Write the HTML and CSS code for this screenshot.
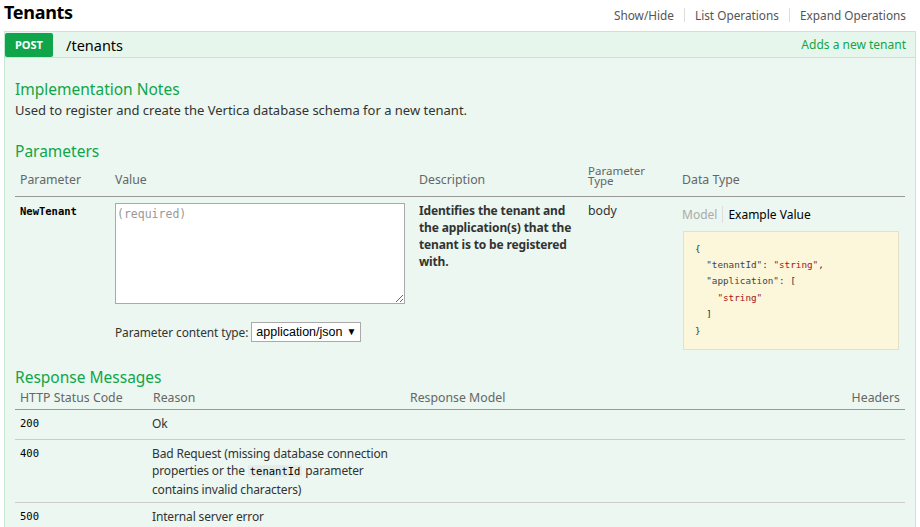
FILE: index.html
```html
<!DOCTYPE html>
<html>
<head>
<meta charset="utf-8">
<link rel="stylesheet" href="styles.css">
</head>
<body>
<div class="page">
  <div class="heading">
    <h2 class="title">Tenants</h2>
    <ul class="options">
      <li>Show/Hide</li>
      <li>List Operations</li>
      <li>Expand Operations</li>
    </ul>
  </div>
  <div class="op">
    <div class="op-head">
      <span class="method">POST</span>
      <span class="path">/tenants</span>
      <span class="summary">Adds a new tenant</span>
    </div>
    <div class="content">
      <h4 class="section first">Implementation Notes</h4>
      <p class="notes">Used to register and create the Vertica database schema for a new tenant.</p>

      <h4 class="section params-title">Parameters</h4>
      <table class="params">
        <colgroup>
          <col class="c1"><col class="c2"><col class="c3"><col class="c4"><col class="c5">
        </colgroup>
        <thead>
          <tr>
            <th>Parameter</th>
            <th>Value</th>
            <th>Description</th>
            <th class="ptype">Parameter<br>Type</th>
            <th>Data Type</th>
          </tr>
        </thead>
        <tbody>
          <tr>
            <td class="pname">NewTenant</td>
            <td>
              <textarea class="body-input" placeholder="(required)"></textarea>
              <div class="ctype">
                <label>Parameter content type:</label>
                <span class="select">application/json <span class="arrow">▼</span></span>
              </div>
            </td>
            <td class="desc">Identifies the tenant and the application(s) that the tenant is to be registered with.</td>
            <td class="body-type">body</td>
            <td>
              <div class="tabs">
                <span class="tab muted">Model</span>
                <span class="tab active">Example Value</span>
              </div>
              <pre class="sample">{
  <span class="key">"tenantId"</span>: <span class="str">"string"</span>,
  <span class="key">"application"</span>: [
    <span class="str">"string"</span>
  ]
}</pre>
            </td>
          </tr>
        </tbody>
      </table>

      <h4 class="section resp-title">Response Messages</h4>
      <table class="resp">
        <colgroup>
          <col class="r1"><col class="r2"><col class="r3"><col class="r4">
        </colgroup>
        <thead>
          <tr>
            <th>HTTP Status Code</th>
            <th>Reason</th>
            <th>Response Model</th>
            <th class="right">Headers</th>
          </tr>
        </thead>
        <tbody>
          <tr>
            <td class="code">200</td>
            <td>Ok</td>
            <td></td>
            <td></td>
          </tr>
          <tr>
            <td class="code">400</td>
            <td>Bad Request (missing database connection properties or the <code>tenantId</code> parameter contains invalid characters)</td>
            <td></td>
            <td></td>
          </tr>
          <tr>
            <td class="code">500</td>
            <td>Internal server error</td>
            <td></td>
            <td></td>
          </tr>
        </tbody>
      </table>
    </div>
  </div>
</div>
</body>
</html>
```

FILE: styles.css
```css
* { box-sizing: border-box; }
html, body { margin: 0; padding: 0; background: #fff; }
body {
  font-family: "Noto Sans", "Open Sans", sans-serif;
  font-size: 13px;
  color: #333;
  overflow: hidden;
}
.page { padding: 0 4px; }

.heading {
  display: flex;
  align-items: center;
  justify-content: space-between;
  height: 31px;
}
.title {
  margin: -8px 0 0 0;
  font-size: 18px;
  font-weight: 700;
  color: #000;
  letter-spacing: -0.3px;
}
.options {
  display: flex;
  list-style: none;
  margin: -2px 0 0 0;
  padding: 0 10px 0 0;
  font-size: 11.8px;
  color: #555;
}
.options li {
  padding: 0 10px;
  border-left: 1px solid #ddd;
  line-height: 14px;
}
.options li:first-child { border-left: 0; }
.options li:last-child { padding-right: 0; }

.op-head {
  display: flex;
  align-items: center;
  height: 27px;
  background: #e7f6ec;
  border: 1px solid #c3e8d1;
  padding: 0 9px 0 0;
}
.method {
  width: 48px;
  height: 24px;
  background: #10a54a;
  color: #fff;
  border-radius: 2px;
  font-size: 11px;
  font-weight: 700;
  display: flex;
  align-items: center;
  justify-content: center;
}
.path {
  margin-left: 13px;
  font-size: 14.5px;
  color: #000;
}
.summary {
  margin-left: auto;
  font-size: 12px;
  color: #10a54a;
}

.content {
  background: #ebf7f0;
  border: 1px solid #c3e8d1;
  border-top: 0;
  padding: 0 10px 40px 10px;
}
.section {
  margin: 0;
  font-size: 15.5px;
  font-weight: 400;
  color: #10a54a;
  line-height: 20px;
}
.section.first { padding-top: 21px; }
.notes {
  margin: 2px 0 0 0;
  line-height: 18px;
  font-size: 13px;
  color: #333;
}
.params-title { margin-top: 22px; }
.resp-title { margin-top: 17px; }

table { border-collapse: collapse; width: 100%; table-layout: fixed; }
.params .c1 { width: 95px; }
.params .c2 { width: 304px; }
.params .c3 { width: 169px; }
.params .c4 { width: 94px; }
.params .c5 { width: auto; }

th {
  text-align: left;
  font-weight: 400;
  color: #666;
  font-size: 12.3px;
  padding: 0 5px;
  border-bottom: 1px solid #999;
  vertical-align: middle;
}
.params th { height: 35px; padding-top: 3px; padding-bottom: 0; }
.params th.ptype { line-height: 10px; font-size: 11.5px; padding-top: 0; padding-bottom: 4px; }
.params td {
  vertical-align: top;
  padding: 6px 5px 0 5px;
}
.pname {
  font-family: "DejaVu Sans Mono", "Liberation Mono", monospace;
  font-weight: 700;
  font-size: 10.5px;
  color: #000;
  padding-top: 8px !important;
}
.body-input {
  display: block;
  width: 290px;
  height: 101px;
  margin: 0;
  border: 1px solid #aaa;
  background: #fff;
  font-family: "DejaVu Sans Mono", "Liberation Mono", monospace;
  font-size: 11.5px;
  padding: 3px 1px;
  resize: both;
}
.body-input::placeholder { color: #999; }
.ctype {
  display: flex;
  align-items: center;
  margin-top: 18px;
  font-size: 11.9px;
  letter-spacing: -0.1px;
  color: #333;
}
.ctype label { margin-right: 3px; }
.select {
  display: inline-flex;
  align-items: center;
  height: 20px;
  border: 1px solid #aaa;
  background: #fff;
  padding: 0 4px;
  font-family: "Liberation Sans", Arial, sans-serif;
  font-size: 12.5px;
  letter-spacing: 0;
  color: #000;
}
.arrow { font-size: 10px; margin-left: 4px; }
.desc {
  font-weight: 700;
  font-size: 12px;
  letter-spacing: -0.15px;
  line-height: 17px;
  color: #333;
  padding-top: 5px !important;
}
.body-type { font-size: 12.3px; color: #333; padding-top: 5px !important; }
.tabs {
  display: flex;
  align-items: center;
  font-size: 12px;
  margin-top: 4px;
  height: 16px;
}
.tab.muted { color: #aaa; padding-right: 5px; border-right: 1px solid #ddd; }
.tab.active { color: #000; padding-left: 5px; }
.sample {
  margin: 8px 1px 0 1px;
  background: #fcf6db;
  border: 1px solid #e5e0c6;
  padding: 9px 11px 6px 11px;
  font-family: "DejaVu Sans Mono", "Liberation Mono", monospace;
  font-size: 9.3px;
  line-height: 16.4px;
  color: #333;
  height: 119px;
}
.sample .key { color: #444; }
.sample .str { color: #a31515; }

.resp { margin-top: 2px; }
.resp .r1 { width: 133px; }
.resp .r2 { width: 257px; }
.resp .r3 { width: auto; }
.resp .r4 { width: 120px; }
.resp th { height: 20px; padding-bottom: 3px; }
.resp th.right { text-align: right; }
.resp td {
  vertical-align: top;
  padding: 5px 5px 0 4px;
  border-bottom: 1px solid #ccc;
  font-size: 12px;
  letter-spacing: -0.15px;
  line-height: 17.5px;
  color: #333;
  height: 30px;
}
.resp tr:nth-child(2) td { height: 63px; }
.resp td.code {
  font-family: "DejaVu Sans Mono", "Liberation Mono", monospace;
  font-size: 10.5px;
  letter-spacing: 0;
  color: #000;
  padding-left: 5px;
}
code {
  font-family: "DejaVu Sans Mono", "Liberation Mono", monospace;
  font-size: 10.5px;
  letter-spacing: 0;
  background: #e5ede8;
  color: #000;
  padding: 0 2px;
  border-radius: 2px;
}
```
